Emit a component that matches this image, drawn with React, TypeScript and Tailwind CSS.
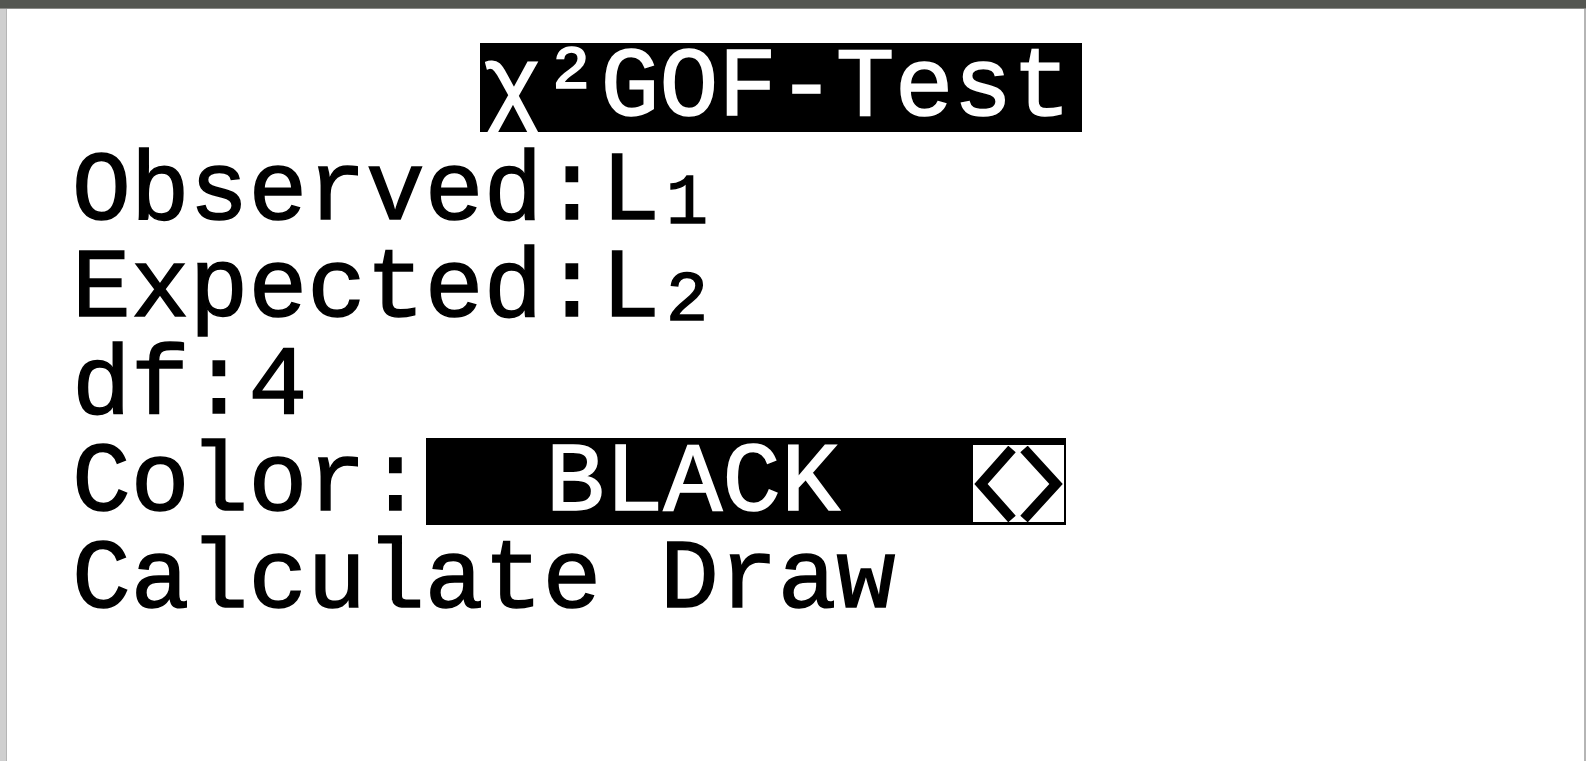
import React from "react";

const LINES: { label: string; value?: string; sub?: string }[] = [
  { label: "Observed:", value: "L", sub: "1" },
  { label: "Expected:", value: "L", sub: "2" },
  { label: "df:", value: "4" },
];

function ArrowsGlyph() {
  return (
    <svg viewBox="0 0 90 76" className="w-[90px] h-[76px]">
      <polyline points="39,3 8,38 39,73" fill="none" stroke="black" strokeWidth="10" />
      <polyline points="51,3 83,38 51,73" fill="none" stroke="black" strokeWidth="10" />
    </svg>
  );
}

export default function App() {
  return (
    <div className="w-[1586px] h-[761px] bg-white flex flex-col overflow-hidden">
      <div className="h-[9px] bg-[#545651] border-b border-[#8a8b88]" />
      <div className="flex-1 flex">
        <div className="w-[7px] bg-[#cfcfcf] border-r border-[#b5b5b5]" />
        <div
          className="flex-1 flex flex-col pl-[65px] pt-[34px] text-black text-[98px] leading-[84px] [-webkit-text-stroke-width:1.5px]"
          style={{ fontFamily: '"Liberation Mono", "DejaVu Sans Mono", monospace' }}
        >
          <div className="h-[89px] flex">
            <div className="ml-[408px] h-[89px] w-[602px] bg-black text-white flex items-center pl-[3px] pt-[2px]">
              <span>χ²GOF-Test</span>
            </div>
          </div>
          <div className="h-[12px]" />
          {LINES.map((l) => (
            <div key={l.label} className="h-[97px] flex items-center whitespace-pre">
              <span>{l.label}</span>
              <span>{l.value}</span>
              {l.sub && <span className="text-[70px] leading-none pt-[24px] pl-[6px]">{l.sub}</span>}
            </div>
          ))}
          <div className="h-[97px] flex items-center whitespace-pre">
            <span>Color:</span>
            <div className="ml-[1px] w-[640px] h-[87px] mt-[-4px] bg-black flex items-center">
              <span className="text-white pl-[120px] w-[547px] pt-[4px]">BLACK</span>
              <div className="bg-white w-[91px] h-[77px] mt-[4px] flex items-center justify-center">
                <ArrowsGlyph />
              </div>
            </div>
          </div>
          <div className="h-[97px] flex items-center whitespace-pre">
            <span>Calculate Draw</span>
          </div>
        </div>
        <div className="w-[2px] bg-[#b5b5b5]" />
      </div>
    </div>
  );
}
